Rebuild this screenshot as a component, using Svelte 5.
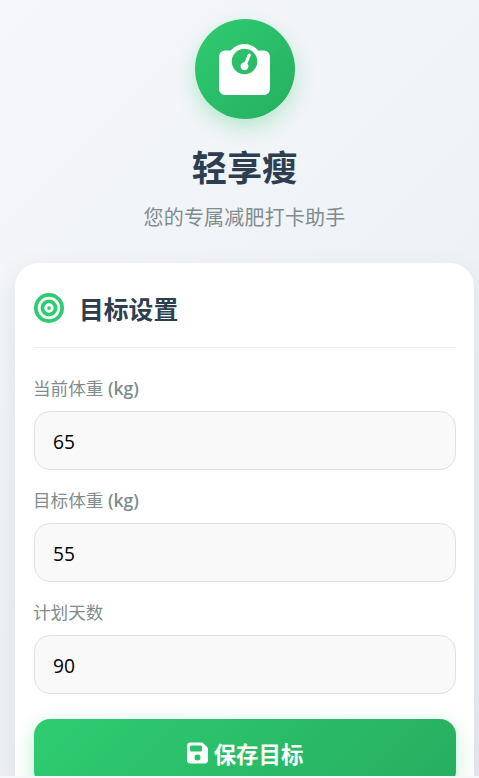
<script>
  const fields = [
    { label: '当前体重', unit: ' (kg)', value: '65' },
    { label: '目标体重', unit: ' (kg)', value: '55' },
    { label: '计划天数', unit: '', value: '90' }
  ];
</script>

<div class="page">
  <header class="hero">
    <div class="logo">
      <svg class="logo-icon" viewBox="0 0 512 512" aria-hidden="true"><path fill="currentColor" d="M128 176a128 128 0 1 1 256 0 128 128 0 1 1 -256 0zM391.8 64C359.5 24.9 310.7 0 256 0S152.5 24.9 120.2 64H64C28.7 64 0 92.7 0 128V448c0 35.3 28.7 64 64 64H448c35.3 0 64-28.7 64-64V128c0-35.3-28.7-64-64-64H391.8zM296 224c0-10.6-4.1-20.2-10.9-27.4l33.6-78.3c3.5-8.1-.3-17.5-8.4-21s-17.5 .3-21 8.4L255.7 184c-22 .1-39.7 18-39.7 40c0 22.1 17.9 40 40 40s40-17.9 40-40z"/></svg>
    </div>
    <h1>轻享瘦</h1>
    <p class="sub">您的专属减肥打卡助手</p>
  </header>

  <section class="card">
    <div class="card-head">
      <svg class="target" viewBox="0 0 512 512" aria-hidden="true"><path fill="currentColor" d="M448 256A192 192 0 1 0 64 256a192 192 0 1 0 384 0zM0 256a256 256 0 1 1 512 0A256 256 0 1 1 0 256zm256 80a80 80 0 1 0 0-160 80 80 0 1 0 0 160zm0-224a144 144 0 1 1 0 288 144 144 0 1 1 0-288zM224 256a32 32 0 1 1 64 0 32 32 0 1 1 -64 0z"/></svg>
      <h2>目标设置</h2>
    </div>

    {#each fields as f}
      <label class="field">
        <span class="label">{f.label}<b>{f.unit}</b></span>
        <input type="text" value={f.value} />
      </label>
    {/each}

    <button type="button" class="save">
      <svg class="save-icon" viewBox="0 0 448 512" aria-hidden="true"><path fill="currentColor" d="M64 32C28.7 32 0 60.7 0 96V416c0 35.3 28.7 64 64 64H384c35.3 0 64-28.7 64-64V173.3c0-17-6.7-33.3-18.7-45.3L352 50.7C340 38.7 323.7 32 306.7 32H64zm0 96c0-17.7 14.3-32 32-32H288c17.7 0 32 14.3 32 32v64c0 17.7-14.3 32-32 32H96c-17.7 0-32-14.3-32-32V128zM224 288a64 64 0 1 1 0 128 64 64 0 1 1 0-128z"/></svg>
      <span>保存目标</span>
    </button>
  </section>
</div>

<style>
  :global(html), :global(body) {
    margin: 0;
    overflow: hidden;
    background: #f5f7fa;
  }
  .page {
    box-sizing: border-box;
    height: 776px;
    overflow: hidden;
    padding: 19px 5px 0 15px;
    background: linear-gradient(135deg, #f5f7fa 0%, #e9edf3 100%);
    font-family: "Open Sans", "Noto Sans CJK SC", sans-serif;
  }
  .hero {
    display: flex;
    flex-direction: column;
    align-items: center;
    margin-bottom: 30px;
  }
  .logo {
    width: 100px;
    height: 100px;
    border-radius: 50%;
    background: linear-gradient(135deg, #2ecc71, #27ae60);
    box-shadow: 0 8px 20px rgba(46, 204, 113, 0.3);
    display: flex;
    align-items: center;
    justify-content: center;
    color: #fff;
  }
  .logo-icon {
    width: 51px;
    height: 51px;
  }
  h1 {
    margin: 24px 0 0;
    font-size: 35.2px;
    line-height: 48px;
    font-weight: 700;
    color: #2c3e50;
  }
  .sub {
    margin: 12px 0 0;
    font-size: 20px;
    line-height: 30px;
    letter-spacing: 0.2px;
    color: #7f8c8d;
  }
  .card {
    box-sizing: border-box;
    height: 560px;
    padding: 28px 18px 19px 19px;
    background: #fff;
    border-radius: 24px;
    box-shadow: 0 10px 30px rgba(0, 0, 0, 0.08);
  }
  .card-head {
    display: flex;
    align-items: center;
    gap: 15px;
    padding-bottom: 19px;
    border-bottom: 1px solid #eeeeee;
    margin-bottom: 28px;
  }
  .target {
    width: 30px;
    height: 30px;
    margin-top: -4px;
    color: #2ecc71;
  }
  h2 {
    margin: 0;
    font-size: 24.8px;
    line-height: 37px;
    font-weight: 700;
    color: #2c3e50;
  }
  .field {
    display: block;
    margin-bottom: 18px;
  }
  .label {
    display: block;
    font-size: 17.6px;
    line-height: 24px;
    color: #7f8c8d;
    margin: 0 0 11px -1px;
  }
  .label b {
    font-weight: 600;
  }
  input {
    display: block;
    box-sizing: border-box;
    width: 100%;
    height: 59px;
    padding: 2px 18px 0;
    border: 1px solid #e0e0e0;
    border-radius: 16px;
    background: #f9f9f9;
    font: inherit;
    font-size: 19.2px;
    color: #000;
    outline: none;
  }
  .save {
    box-sizing: border-box;
    display: flex;
    align-items: center;
    justify-content: center;
    gap: 6px;
    width: 100%;
    height: 68px;
    margin-top: 25px;
    padding: 0;
    border: 0;
    border-radius: 16px;
    background: linear-gradient(135deg, #2ecc71, #27ae60);
    box-shadow: 0 6px 20px rgba(46, 204, 113, 0.3);
    color: #fff;
    font: inherit;
    font-size: 22.4px;
    font-weight: 700;
  }
  .save-icon {
    width: 21px;
    height: 24px;
  }
</style>
